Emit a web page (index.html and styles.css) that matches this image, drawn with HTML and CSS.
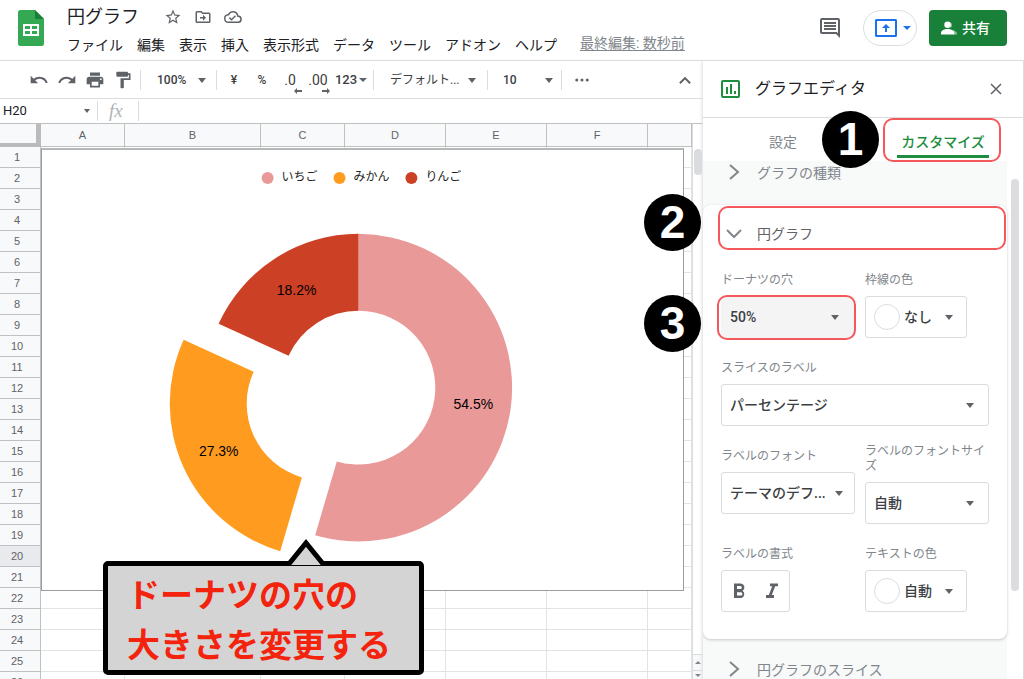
FILE: index.html
```html
<!DOCTYPE html>
<html lang="ja">
<head>
<meta charset="utf-8">
<meta name="viewport" content="width=device-width, initial-scale=1">
<title>円グラフ</title>
<link rel="stylesheet" href="styles.css">
</head>
<body>
<header class="header">
  <svg class="logo" viewBox="0 0 26 36" aria-hidden="true"><path fill="#34a853" d="M2.500 0H17l9 9v24.500a2.500 2.500 0 0 1-2.500 2.500h-21A2.500 2.500 0 0 1 0 33.500v-31A2.500 2.500 0 0 1 2.500 0z"/><path fill="#188038" d="M17 0l9 9h-9z"/><path fill="#fff" fill-rule="evenodd" d="M5 14h16v12H5zm2 2v3h5v-3zm7 0v3h5v-3zm-7 5v3h5v-3zm7 0v3h5v-3z"/></svg>
  <div class="doc">
    <div class="doc-title">
      <h1>円グラフ</h1>
      <button class="plain" aria-label="スター"><svg class="i18" viewBox="0 0 24 24"><path d="M22 9.240l-7.190-.62L12 2 9.190 8.630 2 9.240l5.460 4.730L5.820 21 12 17.270 18.180 21l-1.630-7.030zM12 15.400l-3.760 2.270 1-4.280-3.320-2.880 4.380-.38L12 6.100l1.710 4.040 4.380.38-3.320 2.880 1 4.280z"/></svg></button>
      <button class="plain" aria-label="移動"><svg class="i18" viewBox="0 0 24 24"><path d="M20 6h-8l-2-2H4a2 2 0 0 0-2 2v12c0 1.100.9 2 2 2h16a2 2 0 0 0 2-2V8a2 2 0 0 0-2-2zm0 12H4V6h5.200l2 2H20zm-8-1l4-4-4-4v3H8v2h4z"/></svg></button>
      <button class="plain" aria-label="保存済み"><svg class="i18" viewBox="0 0 24 24"><path d="M19.350 10.040A7.490 7.490 0 0 0 12 4 7.480 7.480 0 0 0 5.350 8.040 6 6 0 0 0 6 20h13a5 5 0 0 0 .35-9.960zM19 18H6a4 4 0 0 1-.42-7.980l1.070-.11.5-.95a5.480 5.480 0 0 1 10.240 1.480l.3 1.500 1.530.11A3 3 0 0 1 19 18zm-9-3.820l-2.090-2.090L6.500 13.500 10 17l6.010-6.010-1.410-1.410z"/></svg></button>
    </div>
    <nav class="menu">
      <button class="plain">ファイル</button><button class="plain">編集</button><button class="plain">表示</button><button class="plain">挿入</button><button class="plain">表示形式</button><button class="plain">データ</button><button class="plain">ツール</button><button class="plain">アドオン</button><button class="plain">ヘルプ</button>
      <a class="last-edit" href="#">最終編集: 数秒前</a>
    </nav>
  </div>
  <div class="actions">
    <button class="plain" aria-label="コメント"><svg class="i24" viewBox="0 0 24 24"><path d="M22 4a2 2 0 0 0-2-2H4a2 2 0 0 0-2 2v12c0 1.100.9 2 2 2h14l4 4zm-2 0v13.200L18.800 16H4V4zM6 12h12v2H6zm0-3h12v2H6zm0-3h12v2H6z"/></svg></button>
    <button class="present" aria-label="会議で共有"><svg class="present-icon" viewBox="0 0 22 18"><path fill="#1a73e8" fill-rule="evenodd" d="M1 0h20l1 1v16l-1 1H1l-1-1V1zm1 2v14h18V2zm9 3l4 4h-3v4h-2V9H7z"/></svg><span class="tri tri-blue"></span></button>
    <button class="share"><svg class="share-icon" viewBox="0 0 17 14"><path fill="#8ac49a" d="M10 1a3.500 3.500 0 0 1 0 6zM12 9c3 .6 5 2 5 4v1h-4z"/><circle cx="7" cy="3.500" r="3.500" fill="#fff"/><path fill="#fff" d="M0 14v-2c0-2.500 4-4 7-4s7 1.500 7 4v2z"/></svg>共有</button>
  </div>
</header>

<div class="main">
  <main class="workspace">
    <div class="toolbar">
      <button class="tool" aria-label="元に戻す"><svg class="i20" viewBox="0 0 24 24"><path d="M12.500 8c-2.650 0-5.050.99-6.900 2.600L2 7v9h9l-3.620-3.620A8 8 0 0 1 20.100 16l2.370-.78A10.500 10.500 0 0 0 12.500 8z"/></svg></button>
      <button class="tool" aria-label="やり直す"><svg class="i20" viewBox="0 0 24 24"><path d="M18.400 10.600A10.500 10.500 0 0 0 1.530 15.220L3.900 16a8 8 0 0 1 12.720-3.620L13 16h9V7z"/></svg></button>
      <button class="tool" aria-label="印刷"><svg class="i20" viewBox="0 0 24 24"><path d="M19 8H5a3 3 0 0 0-3 3v6h4v4h12v-4h4v-6a3 3 0 0 0-3-3zm-3 11H8v-5h8zm3-7a1 1 0 1 1 0-2 1 1 0 0 1 0 2zM18 3H6v4h12z"/></svg></button>
      <button class="tool" aria-label="書式を貼り付け"><svg class="i20" viewBox="0 0 24 24"><path d="M18 4V3a1 1 0 0 0-1-1H5a1 1 0 0 0-1 1v4a1 1 0 0 0 1 1h12a1 1 0 0 0 1-1V6h1v4H9v11a1 1 0 0 0 1 1h2a1 1 0 0 0 1-1v-9h8V4z"/></svg></button>
      <span class="sep"></span>
      <span class="pick pick-zoom"><select aria-label="ズーム"><option>100%</option></select></span>
      <span class="sep"></span>
      <button class="tool">¥</button>
      <button class="tool">%</button>
      <button class="tool decimal">.0<svg class="dec-arrow" viewBox="0 0 8 6"><path d="M0 3l3-3v2h5v2H3v2z"/></svg></button>
      <button class="tool decimal">.00<svg class="dec-arrow" viewBox="0 0 8 6"><path d="M8 3L5 0v2H0v2h5v2z"/></svg></button>
      <button class="tool format">123<span class="tri"></span></button>
      <span class="sep"></span>
      <span class="pick pick-font"><select aria-label="フォント"><option>デフォルト...</option></select></span>
      <span class="sep"></span>
      <span class="pick pick-size"><select aria-label="フォントサイズ"><option>10</option></select></span>
      <span class="sep"></span>
      <button class="tool more" aria-label="その他"><svg class="i18" viewBox="0 0 24 24"><circle cx="5" cy="12" r="2"/><circle cx="12" cy="12" r="2"/><circle cx="19" cy="12" r="2"/></svg></button>
      <button class="tool collapse" aria-label="メニューを隠す"><svg class="i20" viewBox="0 0 24 24"><path d="M12 8l-7 7 1.700 1.700L12 11.400l5.300 5.300L19 15z"/></svg></button>
    </div>
    <div class="formula">
      <span class="pick pick-cell"><input type="text" aria-label="名前ボックス" value="H20"></span>
      <label class="fx" for="fx">fx</label>
      <input id="fx" class="fx-input" type="text">
    </div>
    <div class="sheet">
      <div class="grid-area">
        <table class="grid">
          <colgroup><col class="c-head"><col class="c-s"><col class="c-l"><col class="c-s"><col class="c-m"><col class="c-m"><col class="c-m"><col></colgroup>
          <thead><tr><th class="corner"></th><th>A</th><th>B</th><th>C</th><th>D</th><th>E</th><th>F</th><th></th></tr></thead>
          <tbody>
            <tr><th>1</th><td></td><td></td><td></td><td></td><td></td><td></td><td></td></tr>
            <tr><th>2</th><td></td><td></td><td></td><td></td><td></td><td></td><td></td></tr>
            <tr><th>3</th><td></td><td></td><td></td><td></td><td></td><td></td><td></td></tr>
            <tr><th>4</th><td></td><td></td><td></td><td></td><td></td><td></td><td></td></tr>
            <tr><th>5</th><td></td><td></td><td></td><td></td><td></td><td></td><td></td></tr>
            <tr><th>6</th><td></td><td></td><td></td><td></td><td></td><td></td><td></td></tr>
            <tr><th>7</th><td></td><td></td><td></td><td></td><td></td><td></td><td></td></tr>
            <tr><th>8</th><td></td><td></td><td></td><td></td><td></td><td></td><td></td></tr>
            <tr><th>9</th><td></td><td></td><td></td><td></td><td></td><td></td><td></td></tr>
            <tr><th>10</th><td></td><td></td><td></td><td></td><td></td><td></td><td></td></tr>
            <tr><th>11</th><td></td><td></td><td></td><td></td><td></td><td></td><td></td></tr>
            <tr><th>12</th><td></td><td></td><td></td><td></td><td></td><td></td><td></td></tr>
            <tr><th>13</th><td></td><td></td><td></td><td></td><td></td><td></td><td></td></tr>
            <tr><th>14</th><td></td><td></td><td></td><td></td><td></td><td></td><td></td></tr>
            <tr><th>15</th><td></td><td></td><td></td><td></td><td></td><td></td><td></td></tr>
            <tr><th>16</th><td></td><td></td><td></td><td></td><td></td><td></td><td></td></tr>
            <tr><th>17</th><td></td><td></td><td></td><td></td><td></td><td></td><td></td></tr>
            <tr><th>18</th><td></td><td></td><td></td><td></td><td></td><td></td><td></td></tr>
            <tr><th>19</th><td></td><td></td><td></td><td></td><td></td><td></td><td></td></tr>
            <tr class="current"><th>20</th><td></td><td></td><td></td><td></td><td></td><td></td><td></td></tr>
            <tr><th>21</th><td></td><td></td><td></td><td></td><td></td><td></td><td></td></tr>
            <tr><th>22</th><td></td><td></td><td></td><td></td><td></td><td></td><td></td></tr>
            <tr><th>23</th><td></td><td></td><td></td><td></td><td></td><td></td><td></td></tr>
            <tr><th>24</th><td></td><td></td><td></td><td></td><td></td><td></td><td></td></tr>
            <tr><th>25</th><td></td><td></td><td></td><td></td><td></td><td></td><td></td></tr>
            <tr><th>26</th><td></td><td></td><td></td><td></td><td></td><td></td><td></td></tr>
          </tbody>
        </table>
        <div class="chart">
          <svg viewBox="0 0 642 442" role="img" aria-label="円グラフ">
            <path fill="#ea9999" d="M317 84A154 154 0 1 1 273.600 385.800L295.300 311.900A77 77 0 1 0 317 161z"/>
            <path fill="#cc4125" d="M317 84V161A77 77 0 0 0 247 206L176.900 174A154 154 0 0 1 317 84z"/>
            <path fill="#ff9c1f" d="M238.600 401.800A154 154 0 0 1 141.900 190L212 222A77 77 0 0 0 260.300 327.900z"/>
            <g class="legend">
              <circle cx="226" cy="28" r="6" fill="#ea9999"/><text x="240" y="31">いちご</text>
              <circle cx="298" cy="28" r="6" fill="#ff9c1f"/><text x="312" y="31">みかん</text>
              <circle cx="370" cy="28" r="6" fill="#cc4125"/><text x="384" y="31">りんご</text>
            </g>
            <g class="values"><text x="255" y="145">18.2%</text><text x="177" y="306">27.3%</text><text x="432" y="259">54.5%</text></g>
          </svg>
        </div>
        <div class="callout">
          <svg class="pointer" viewBox="0 0 40 28" aria-hidden="true"><path d="M2 27L20 5l18 22" fill="#d4d4d4" stroke="#000" stroke-width="5"/></svg>
          ドーナツの穴の<br>大きさを変更する
        </div>
      </div>
      <div class="vscroll"><div class="vtrack"><span class="vthumb"></span></div><button class="step" aria-label="上へ"><span class="tri tri-up"></span></button><button class="step" aria-label="下へ"><span class="tri tri-down"></span></button></div>
    </div>
  </main>

  <aside class="panel">
    <div class="panel-head">
      <svg class="chart-icon" viewBox="0 0 19 18"><rect x="1" y="1" width="17" height="16" rx="1" fill="none" stroke="#1e8e3e" stroke-width="2"/><path fill="#1e8e3e" d="M5 7h2v7H5zm4-3h2v10H9zm4 7h2v3h-2z"/></svg>
      <h2>グラフエディタ</h2>
      <button class="plain close" aria-label="閉じる"><svg class="i18" viewBox="0 0 18 18"><path d="M4 4l10 10M14 4L4 14" fill="none" stroke="#5f6368" stroke-width="1.500"/></svg></button>
    </div>
    <div class="tabs">
      <button class="tab">設定</button>
      <button class="tab tab-on"><span>カスタマイズ</span></button>
    </div>
    <div class="panel-body">
      <div class="sections">
        <button class="section"><svg class="chev" viewBox="0 0 18 18"><path d="M5 2l8 7-8 7"/></svg>グラフの種類</button>
        <section class="card">
          <button class="section card-head"><svg class="chev" viewBox="0 0 18 18"><path d="M2 6l7 7 7-7"/></svg>円グラフ</button>
          <div class="fields">
            <div class="field"><label for="hole">ドーナツの穴</label><span class="pick box marked"><select id="hole"><option>50%</option></select></span></div>
            <div class="field"><label for="border">枠線の色</label><span class="pick box swatch"><select id="border"><option>なし</option></select></span></div>
            <div class="field wide"><label for="slice">スライスのラベル</label><span class="pick box far"><select id="slice"><option>パーセンテージ</option></select></span></div>
            <div class="field"><label for="lfont">ラベルのフォント</label><span class="pick box"><select id="lfont"><option>テーマのデフ...</option></select></span></div>
            <div class="field"><label for="lsize">ラベルのフォントサイズ</label><span class="pick box far"><select id="lsize"><option>自動</option></select></span></div>
            <div class="field"><span class="label" id="fmt">ラベルの書式</span><div class="style-group" role="group" aria-labelledby="fmt"><button aria-label="太字"><svg class="i20" viewBox="2 2 20 20"><path d="M15.600 11.800A4 4 0 0 0 14 4.500H7V19h7.500a4.100 4.100 0 0 0 1.100-7.200zM10 7h3.300a1.500 1.500 0 0 1 0 3H10zm3.800 9.500H10v-3.200h3.800a1.600 1.600 0 0 1 0 3.200z"/></svg></button><button aria-label="斜体"><svg class="i20" viewBox="2 2 20 20"><path d="M10 4.500v2.700h2.200L8.800 16H6v3h8v-3h-2.200l3.400-8.800H18V4.500z"/></svg></button></div></div>
            <div class="field"><label for="tcolor">テキストの色</label><span class="pick box swatch"><select id="tcolor"><option>自動</option></select></span></div>
          </div>
        </section>
        <button class="section section-next"><svg class="chev" viewBox="0 0 18 18"><path d="M5 2l8 7-8 7"/></svg>円グラフのスライス</button>
      </div>
      <span class="pthumb"></span>
    </div>
    <span class="badge badge-1">1</span>
    <span class="badge badge-2">2</span>
    <span class="badge badge-3">3</span>
  </aside>
</div>
</body>
</html>
```

FILE: styles.css
```css
* { box-sizing: border-box; }

body {
  margin: 0;
  height: 100vh;
  display: flex;
  flex-direction: column;
  overflow: hidden;
  background: #fff;
  color: #202124;
  font: 14px/20px Roboto, "Noto Sans CJK JP", sans-serif;
}

button, input, select { font: inherit; color: inherit; margin: 0; }
h1, h2 { margin: 0; font-weight: 400; }
svg { display: block; fill: #5f6368; flex: none; }

.plain, .tool, .step, .tab, .section, .style-group button {
  border: 0;
  background: none;
  padding: 0;
}

.i18 { width: 18px; height: 18px; }
.i20 { width: 20px; height: 20px; }
.i24 { width: 24px; height: 24px; }

.tri {
  display: inline-block;
  border: 4px solid transparent;
  border-top-color: #5f6368;
  border-bottom: 0;
}
.tri-blue { border-top-color: #1a73e8; }

/* Header */
.header {
  display: flex;
  height: 61px;
  flex: none;
  padding: 0 17px 0 18px;
  border-bottom: 1px solid #dadce0;
}
.logo { width: 26px; height: 36px; margin: 10px 23px 0 0; }
.doc { flex: 1; padding-top: 4px; white-space: nowrap; }
.doc-title { display: flex; align-items: center; gap: 12px; height: 25px; }
.doc-title h1 { font-size: 18px; line-height: 25px; margin-right: 13px; }
.menu { display: flex; gap: 14px; padding-top: 6px; }
.last-edit { color: #80868b; margin: -2px 0 0 9px; text-underline-offset: 2px; }
.actions { display: flex; align-items: center; height: 36px; margin-top: 10px; }
.present {
  display: flex;
  align-items: center;
  gap: 6px;
  height: 36px;
  width: 54px;
  margin: 0 12px 0 21px;
  padding: 0 0 0 11px;
  border: 1px solid #dadce0;
  border-radius: 18px;
  background: #fff;
}
.present-icon { width: 22px; height: 18px; }
.share {
  display: flex;
  align-items: center;
  gap: 5px;
  height: 36px;
  width: 78px;
  padding: 0 0 0 12px;
  border: 0;
  border-radius: 4px;
  background: #188038;
  color: #fff;
  font-weight: 500;
}
.share-icon { width: 16px; height: 14px; }

.main { display: flex; flex: 1; min-height: 0; }
.workspace { flex: 1; min-width: 0; display: flex; flex-direction: column; }

/* Drop-downs */
.pick { position: relative; display: flex; }
.pick select, .pick input {
  appearance: none;
  width: 100%;
  border: 0;
  outline: 0;
  background: none;
  border-radius: 0;
}
.pick::after {
  content: "";
  position: absolute;
  right: 8px;
  top: 50%;
  margin-top: -2px;
  border: 4px solid transparent;
  border-top: 5px solid #5f6368;
  border-bottom: 0;
  pointer-events: none;
}

/* Toolbar */
.toolbar {
  display: flex;
  align-items: center;
  flex: none;
  height: 38px;
  padding-left: 25px;
  border-bottom: 1px solid #dadce0;
  color: #3c4043;
  font-size: 12px;
  font-weight: 500;
}
.tool { display: flex; align-items: center; justify-content: center; width: 28px; height: 28px; flex: none; }
.sep { width: 1px; height: 20px; background: #dadce0; margin: 0 3px; flex: none; }
.pick-zoom { width: 69px; }
.pick-zoom select { padding: 0 13px; }
.pick-zoom::after { right: 7px; }
.pick-font { width: 107px; }
.pick-font select { padding: 0 13px; font-weight: 400; }
.pick-size { width: 67px; }
.pick-size select { padding: 0 12px; }
.pick-size::after { right: 5px; }
.decimal { position: relative; font-size: 14px; font-weight: 400; }
.dec-arrow { position: absolute; right: 2px; bottom: 0; width: 8px; height: 6px; }
.format { width: 38px; gap: 2px; font-size: 13px; }
.more { width: 34px; }
.collapse { margin-left: auto; margin-right: 4px; }

/* Formula bar */
.formula { display: flex; align-items: center; flex: none; height: 24px; }
.pick-cell { width: 98px; border-right: 1px solid #dadce0; font-size: 13px; }
.pick-cell input { padding: 0 3px; height: 20px; }
.pick-cell::after { border-width: 3px; border-top-width: 4px; border-bottom: 0; right: 7px; }
.fx { width: 41px; padding-left: 11px; border-right: 1px solid #dadce0; color: #b0b3b6; font: italic 19px/20px "Liberation Serif", serif; }
.fx-input { flex: 1; min-width: 0; border: 0; outline: 0; background: none; height: 20px; }

/* Sheet */
.sheet { display: flex; flex: 1; min-height: 0; }
.grid-area { position: relative; flex: 1; min-width: 0; overflow: hidden; }
.grid { width: 100%; table-layout: fixed; border-collapse: separate; border-spacing: 0; border-top: 1px solid #c0c0c0; }
.c-head { width: 41px; }
.c-s { width: 84px; }
.c-m { width: 101px; }
.c-l { width: 136px; }
.grid th, .grid td { height: 21px; padding: 0; border: solid #e2e3e3; border-width: 0 1px 1px 0; }
.grid th { border-color: #c0c0c0; background: #f8f9fa; color: #5f6368; font: 11px/14px "Liberation Sans", Arial, sans-serif; }
.grid tbody th { padding-right: 6px; }
.grid thead th { height: 23px; }
.grid .corner { border-right: 5px solid #bbb; border-bottom: 4px solid #bbb; }
.grid .current th { background: #e8eaed; }

.chart { position: absolute; left: 41px; top: 25px; width: 643px; height: 443px; border: 1px solid #9a9d9f; border-top: 2px solid #b4b8b9; background: #fff; }
.legend { fill: #222; font-size: 12px; }
.values { fill: #000; font: 14px "Liberation Sans", Arial, sans-serif; text-anchor: middle; }

.callout {
  position: absolute;
  left: 103px;
  top: 438px;
  padding: 2px 28px 2px 19px;
  border: 5px solid #000;
  border-radius: 5px;
  background: #d4d4d4;
  color: #f3230d;
  font: bold 33px/50px "Noto Sans CJK JP", sans-serif;
  white-space: nowrap;
}
.pointer { position: absolute; left: 178px; top: -28px; width: 40px; height: 28px; }

.vscroll { width: 11px; flex: none; display: flex; flex-direction: column; border-left: 1px solid #dadce0; border-top: 1px solid #c0c0c0; background: #fff; }
.vtrack { flex: 1; padding: 25px 1px 0 1px; }
.vthumb { display: block; height: 26px; border-radius: 4px; background: #dadce0; }
.step { height: 16px; flex: none; display: flex; align-items: center; justify-content: center; background: #f8f9fa; border-top: 1px solid #dadce0; }
.step:last-child { height: 9px; }
.tri-up, .tri-down { border: 3px solid transparent; border-top: 0; border-bottom-color: #80868b; }
.tri-down { border-top: 3px solid #80868b; border-bottom: 0; }

/* Chart editor */
.panel {
  position: relative;
  flex: none;
  width: 321px;
  display: flex;
  flex-direction: column;
  border-right: 1px solid #dadce0;
  background: #fff;
  box-shadow: -1px 0 3px #dadce0;
  clip-path: inset(0 0 0 -80px);
}
.panel-head { display: flex; align-items: center; height: 57px; flex: none; padding: 0 18px; border-bottom: 1px solid #dadce0; }
.chart-icon { width: 19px; height: 18px; }
.panel-head h2 { flex: 1; padding-left: 15px; font-size: 16px; line-height: 24px; }
.tabs { display: flex; height: 43px; flex: none; }
.tab { flex: 1; color: #80868b; padding-top: 4px; }
.tab-on { position: relative; color: #1e8e3e; font-weight: 500; padding: 0; }
.tab-on span { display: block; margin: 0 34px; padding: 11px 0 3px; border-bottom: 3px solid #1e8e3e; }
.tab-on::after, .marked::before, .card-head::after {
  content: "";
  position: absolute;
  border: 2px solid #f4585c;
  border-radius: 10px;
  pointer-events: none;
}
.tab-on::after { inset: 0 22px -1px 20px; }
.marked::before { inset: -2px -2px -3px -5px; }
.card-head::after { inset: 1px 1px 18px 15px; }

.panel-body { display: flex; flex: 1; min-height: 0; overflow: hidden; }
.sections { width: 304px; flex: none; background: #f8f9f9; }
.section { display: flex; gap: 14px; width: 100%; height: 44px; padding: 2px 0 0 22px; color: #80868b; }
.chev { width: 18px; height: 18px; }
.chev path { fill: none; stroke: #80868b; stroke-width: 2; }
.card { border-radius: 8px; background: #fff; box-shadow: 0 1px 3px #c4c7ca; padding-bottom: 27px; }
.card-head { position: relative; height: 63px; padding-top: 19px; color: #5f6368; }
.section-next { padding-top: 21px; }
.fields { display: grid; grid-template-columns: 134px 124px; gap: 18px 10px; padding: 0 18px; }
.field { display: flex; flex-direction: column; align-items: flex-start; gap: 8px; }
.wide { grid-column: span 2; }
.field label, .field .label { display: flex; align-items: flex-end; min-height: 20px; color: #80868b; font-size: 12px; line-height: 15px; }
.box { width: 100%; height: 42px; border: 1px solid #dadce0; border-radius: 3px; color: #3c4043; font-weight: 500; }
.box select { padding: 0 8px; }
.box::after { right: 11px; }
.far::after { right: 14px; }
.marked { background: #f4f4f4; border-color: #f4f4f4; }
.marked::after { right: 15px; }
.swatch { width: 102px; align-items: center; padding-left: 8px; }
.swatch::before { content: ""; flex: none; width: 24px; height: 24px; border: 1px solid #dadce0; border-radius: 50%; }
.swatch select { padding: 0 4px; height: 40px; }
.swatch::after { right: 13px; }
.style-group { display: flex; align-items: center; height: 42px; width: 69px; border: 1px solid #dadce0; border-radius: 3px; }
.style-group button { flex: 1; display: flex; justify-content: center; }
.pthumb { width: 8px; height: 412px; margin: 18px 0 0 4px; border-radius: 4px; background: #dadce0; flex: none; }

.badge {
  position: absolute;
  width: 57px;
  height: 57px;
  border-radius: 50%;
  background: #000;
  color: #fff;
  text-align: center;
  font: bold 46px/56px "Liberation Sans", Arial, sans-serif;
}
.badge-1 { right: 144px; top: 50px; }
.badge-2 { right: 322px; top: 133px; }
.badge-3 { right: 322px; top: 234px; }
```
